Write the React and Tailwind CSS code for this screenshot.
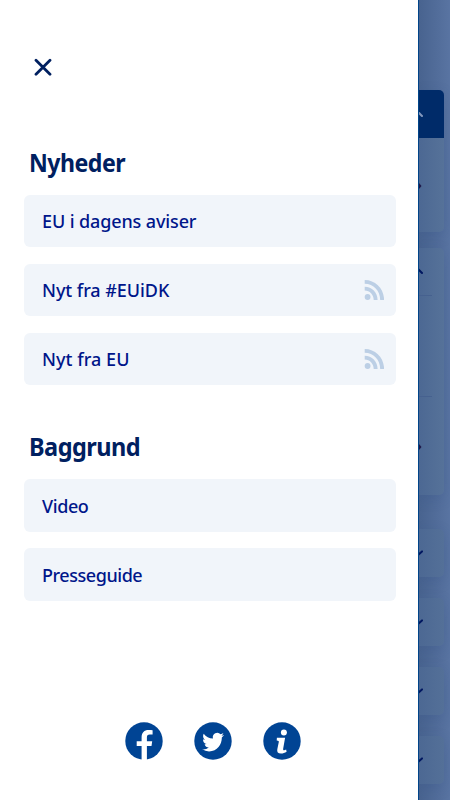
import { clsx } from 'clsx';

const sections = [
  {
    title: 'Nyheder',
    titleClass: 'scale-x-[0.925]',
    items: [
      { label: 'EU i dagens aviser', textClass: 'tracking-[-0.12px]' },
      { label: 'Nyt fra #EUiDK', textClass: 'tracking-[-0.06px]', feed: true },
      { label: 'Nyt fra EU', textClass: 'tracking-[0.05px]', feed: true }
    ]
  },
  {
    title: 'Baggrund',
    titleClass: 'scale-x-[0.94]',
    items: [
      { label: 'Video', textClass: 'tracking-[-0.4px] pt-px' },
      { label: 'Presseguide', textClass: 'tracking-[-0.45px] pt-px' }
    ]
  }
];

const CloseIcon = () => (
  <svg className="w-[18px] h-[18px]" viewBox="0 0 18 18" fill="none" stroke="#002060" strokeWidth="2.8" strokeLinecap="round">
    <path d="M2 2.3 16 16.3M16 2.3 2 16.3" />
  </svg>
);

const FeedIcon = () => (
  <svg className="w-5 h-5" viewBox="0 0 20 20" fill="#bccfe5">
    <circle cx="3.6" cy="17" r="2.9" />
    <path d="M.7 0v3.8C9.5 3.8 16.2 10.9 16.2 20h3.9C20.1 8.9 11.7 0 .7 0zm0 6.8v3.8c5 0 9 4.2 9 9.4h3.9c0-7.3-5.7-13.2-12.9-13.2z" />
  </svg>
);

const FacebookIcon = () => (
  <svg className="w-[38px] h-[38px]" viewBox="0 0 38 38">
    <circle cx="19" cy="19" r="18.7" fill="#004494" />
    <path fill="#fff" d="M16.6 38V24h-4.9v-4.7h4.9v-4.1c0-4.7 2.6-7.3 7-7.3 1.7 0 3 .1 4 .3v4.3h-2.8c-2.2 0-2.9 1-2.9 2.9v3.9h5.3l-.7 4.7h-4.6v14z" />
  </svg>
);

const TwitterIcon = () => (
  <svg className="w-[38px] h-[38px]" viewBox="0 0 38 38">
    <circle cx="19" cy="19" r="18.7" fill="#004494" />
    <path
      fill="#fff"
      transform="translate(8.2 8.6) scale(.91 .96)"
      d="M23.953 4.57a10 10 0 01-2.825.775 4.958 4.958 0 002.163-2.723c-.951.555-2.005.959-3.127 1.184a4.92 4.92 0 00-8.384 4.482C7.69 8.095 4.067 6.13 1.64 3.162a4.822 4.822 0 00-.666 2.475c0 1.71.87 3.213 2.188 4.096a4.904 4.904 0 01-2.228-.616v.06a4.923 4.923 0 003.946 4.827 4.996 4.996 0 01-2.212.085 4.936 4.936 0 004.604 3.417 9.867 9.867 0 01-6.102 2.105c-.39 0-.779-.023-1.17-.067a13.995 13.995 0 007.557 2.209c9.053 0 13.998-7.496 13.998-13.985 0-.21 0-.42-.015-.63A9.935 9.935 0 0024 4.59z"
    />
  </svg>
);

const InfoIcon = () => (
  <svg className="w-[38px] h-[38px]" viewBox="0 0 38 38">
    <circle cx="19" cy="19" r="18.7" fill="#004494" />
    <circle cx="20.9" cy="10.4" r="3" fill="#fff" />
    <path fill="#fff" d="M13.9 15.8h8.2l-1.9 10.7c-.2 1.3.1 1.8.9 1.8.6 0 1.2-.2 2-.7l.5 2.1c-1.8 1.2-3.6 1.8-5.6 1.8-3.100 0-4.200-1.600-3.700-4.300l1.500-7.200c.1-.8-.1-1.200-.8-1.300l-1.300-.2z" />
  </svg>
);

const Chevron = ({ up, light }) => (
  <svg className="w-3 h-2" viewBox="0 0 12 8" fill="none" stroke={light ? '#8298bd' : '#001760'} strokeWidth="2" strokeLinecap="round">
    <path d={up ? 'M-1 1 3 5' : 'M-1 6 3 2.4'} />
  </svg>
);

const Arrow = () => (
  <svg className="w-1 h-2" viewBox="0 0 4 8" fill="#1d1748">
    <path d="M0 1 2.5 4 0 7z" />
  </svg>
);

// The page left visible at the right of the open drawer
const Backdrop = () => (
  <div className="w-8 h-full overflow-hidden border-l border-[#004489] bg-linear-to-r from-[#48638f] to-[#5974a2] pt-[90px]">
    <div className="w-[25px] h-[142px] rounded-r-[5px] bg-linear-to-r from-[#4c6893] to-[#567299] overflow-hidden shadow-[0_4px_14px_#29477b33]">
      <div className="h-12 bg-[#002b69] pt-[21px]">
        <Chevron up light />
      </div>
      <div className="pt-[44px]">
        <Arrow />
      </div>
    </div>
    <div className="mt-4 w-[25px] h-[247px] rounded-r-[5px] bg-linear-to-r from-[#4c6893] to-[#567299] shadow-[0_4px_14px_#29477b33] pt-5">
      <Chevron up />
      <div className="mt-[19px] w-[13px] h-px bg-[#46618f]" />
      <div className="mt-[100px] w-[13px] h-px bg-[#46618f]" />
      <div className="mt-[46px]">
        <Arrow />
      </div>
    </div>
    <div className="mt-[34px] flex flex-col gap-[21px]">
      {[0, 1, 2, 3].map((row) => (
        <div key={row} className="w-[25px] h-12 flex items-center rounded-r-[5px] bg-linear-to-r from-[#4c6893] to-[#547098] shadow-[0_4px_14px_#29477b33]">
          <Chevron />
        </div>
      ))}
    </div>
  </div>
);

const MenuSection = ({ section }) => (
  <section>
    <h2 className={clsx('ml-[5px] h-8 leading-[30px] text-[25px] font-bold tracking-[-0.55px] text-[#002060] origin-left', section.titleClass)}>
      {section.title}
    </h2>
    <ul className="mt-4 flex flex-col gap-[16.7px]">
      {section.items.map((item) => (
        <li key={item.label} className="h-[52.3px] rounded-[6px] bg-[#f1f5fa] pl-[18px] pr-3 flex items-center justify-between">
          <a href="#" className={clsx('text-[18px] leading-6 font-medium text-[#00168a] whitespace-nowrap', item.textClass)}>
            {item.label}
          </a>
          {item.feed && <FeedIcon />}
        </li>
      ))}
    </ul>
  </section>
);

export default function App() {
  return (
    <div className="w-[450px] h-[800px] flex overflow-hidden bg-white font-['Noto_Sans',sans-serif]">
      <aside className="w-[418px] h-full shrink-0 flex flex-col bg-white pl-6 pr-[22px] pt-[58px]">
        <button className="ml-[10px] w-[18px] h-[18px]" aria-label="Luk">
          <CloseIcon />
        </button>
        <nav className="mt-[71px] flex flex-col gap-[46px]">
          {sections.map((section) => (
            <MenuSection key={section.title} section={section} />
          ))}
        </nav>
        <div className="mt-auto mb-10 ml-[101px] flex gap-[31px]">
          <FacebookIcon />
          <TwitterIcon />
          <InfoIcon />
        </div>
      </aside>
      <Backdrop />
    </div>
  );
}
